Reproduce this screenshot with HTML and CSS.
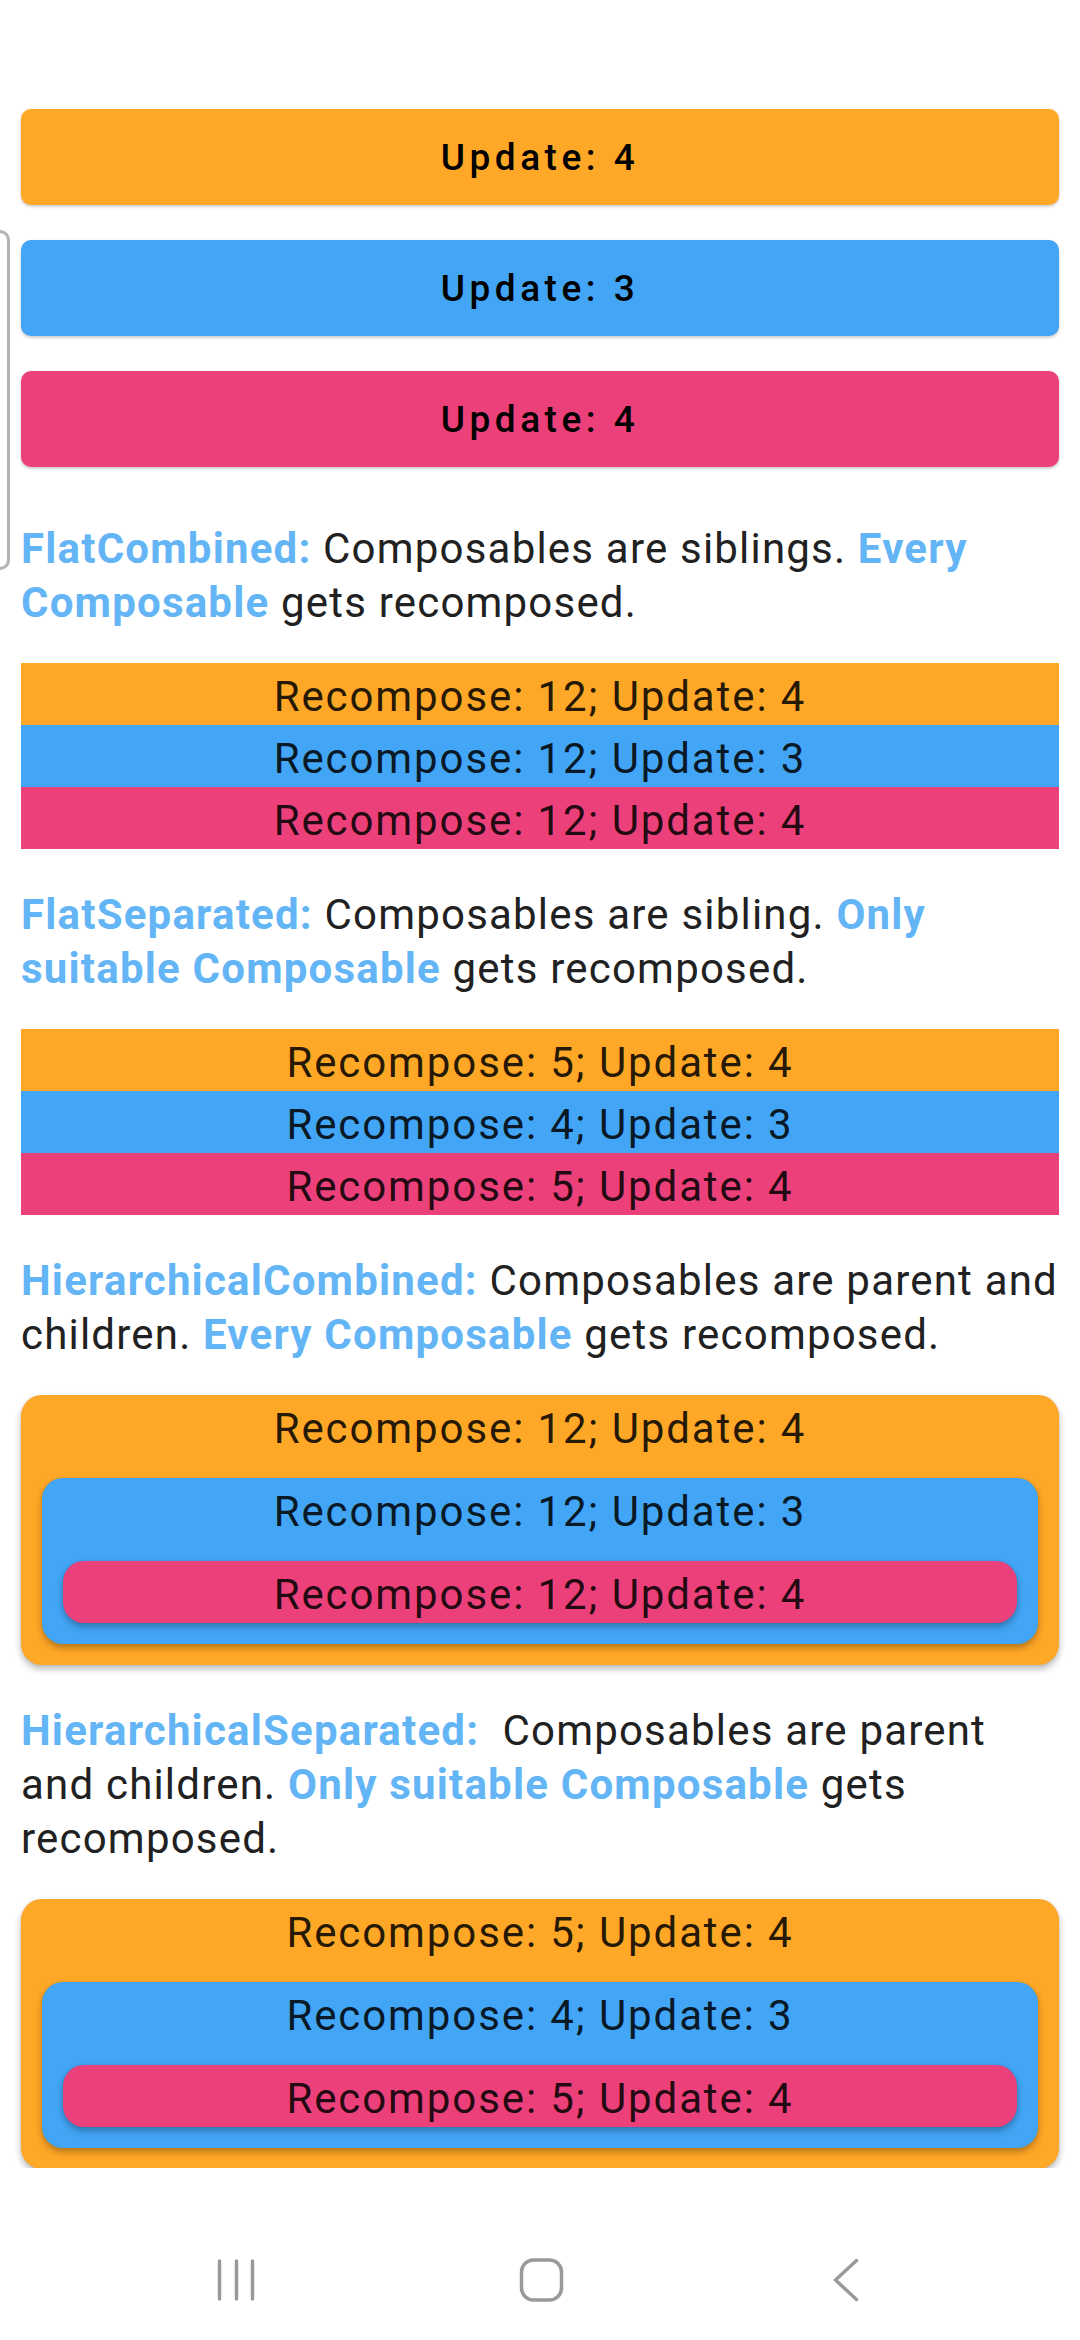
FILE: index.html
```html
<!DOCTYPE html>
<html>
<head>
<meta charset="utf-8">
<link rel="stylesheet" href="styles.css">
</head>
<body>
<div class="screen">
  <main class="content">
    <div class="buttons">
      <div class="btn orange">Update: 4</div>
      <div class="btn blue">Update: 3</div>
      <div class="btn pink">Update: 4</div>
    </div>

    <p class="desc first"><b>FlatCombined:</b> Composables are siblings. <b>Every Composable</b> gets recomposed.</p>
    <div class="flat">
      <div class="label orange">Recompose: 12; Update: 4</div>
      <div class="label blue">Recompose: 12; Update: 3</div>
      <div class="label pink">Recompose: 12; Update: 4</div>
    </div>

    <p class="desc"><b>FlatSeparated:</b> Composables are sibling. <b>Only suitable Composable</b> gets recomposed.</p>
    <div class="flat">
      <div class="label orange">Recompose: 5; Update: 4</div>
      <div class="label blue">Recompose: 4; Update: 3</div>
      <div class="label pink">Recompose: 5; Update: 4</div>
    </div>

    <p class="desc"><b>HierarchicalCombined:</b> Composables are parent and children. <b>Every Composable</b> gets recomposed.</p>
    <div class="card orange">
      <div class="label">Recompose: 12; Update: 4</div>
      <div class="card blue">
        <div class="label">Recompose: 12; Update: 3</div>
        <div class="card leaf pink">
          <div class="label">Recompose: 12; Update: 4</div>
        </div>
      </div>
    </div>

    <p class="desc"><b>HierarchicalSeparated:</b>&nbsp; Composables are parent and children. <b>Only suitable Composable</b> gets recomposed.</p>
    <div class="card orange">
      <div class="label">Recompose: 5; Update: 4</div>
      <div class="card blue">
        <div class="label">Recompose: 4; Update: 3</div>
        <div class="card leaf pink">
          <div class="label">Recompose: 5; Update: 4</div>
        </div>
      </div>
    </div>
  </main>

  <div class="edge-handle"></div>

  <nav class="navbar">
    <svg class="nav-icon" viewBox="0 0 60 60" width="60" height="60">
      <line x1="13.5" y1="11" x2="13.5" y2="49" />
      <line x1="30.5" y1="11" x2="30.5" y2="49" />
      <line x1="46.5" y1="11" x2="46.5" y2="49" />
    </svg>
    <svg class="nav-icon" viewBox="0 0 60 60" width="60" height="60">
      <rect x="10.5" y="10" width="40" height="40" rx="12" ry="12" />
    </svg>
    <svg class="nav-icon" viewBox="0 0 60 60" width="60" height="60">
      <polyline points="40.5,10.5 19.5,30 40.5,49.5" />
    </svg>
  </nav>
</div>
</body>
</html>
```

FILE: styles.css
```css
html, body {
  margin: 0;
  padding: 0;
  background: #ffffff;
}

body {
  font-family: Roboto, "Noto Sans", sans-serif;
  color: rgba(0, 0, 0, 0.87);
}

.screen {
  position: relative;
  width: 1080px;
  height: 2340px;
  display: flex;
  flex-direction: column;
  overflow: hidden;
}

.content {
  height: 2168px;
  flex: none;
  overflow: hidden;
  box-sizing: border-box;
  padding: 109px 21px 0;
  display: flex;
  flex-direction: column;
}

.orange { background: #FFA726; }
.blue { background: #42A5F5; }
.pink { background: #EC407A; }

.buttons {
  display: flex;
  flex-direction: column;
  gap: 35px;
}

.btn {
  height: 96px;
  border-radius: 10px;
  display: flex;
  align-items: center;
  justify-content: center;
  font-size: 37px;
  font-weight: 500;
  letter-spacing: 4.5px;
  color: #000000;
  box-shadow: 0 2px 3px rgba(0, 0, 0, 0.18), 0 0 2px rgba(0, 0, 0, 0.08);
}

.desc {
  margin: 39px -6px 33px 0;
  font-size: 42px;
  line-height: 54px;
  letter-spacing: 1.2px;
  color: #212121;
}

.desc.first {
  margin-top: 55px;
}

.desc b {
  font-weight: 700;
  color: #64B5F6;
}

.flat {
  display: flex;
  flex-direction: column;
}

.label {
  height: 62px;
  box-sizing: border-box;
  padding-top: 5px;
  line-height: 57px;
  font-size: 42px;
  letter-spacing: 1.9px;
  text-align: center;
  color: rgba(0, 0, 0, 0.87);
  white-space: nowrap;
}

.card {
  border-radius: 21px;
  padding: 0 21px 21px;
  display: flex;
  flex-direction: column;
  box-shadow: 0 4px 7px rgba(0, 0, 0, 0.28), 0 0 2px rgba(0, 0, 0, 0.1);
}

.card > .card {
  margin-top: 21px;
}

.card.leaf {
  padding: 0;
}

.edge-handle {
  position: absolute;
  left: -22px;
  top: 230px;
  width: 32px;
  height: 340px;
  box-sizing: border-box;
  border: 3px solid #b3b3b3;
  border-radius: 10px;
}

.navbar {
  flex: 1;
  display: flex;
  justify-content: center;
  align-items: flex-start;
  gap: 245px;
  padding-top: 82px;
  padding-left: 2px;
}

.nav-icon {
  fill: none;
  stroke: #9a9a9a;
  stroke-width: 3.5;
  stroke-linecap: round;
  stroke-linejoin: round;
}
```
